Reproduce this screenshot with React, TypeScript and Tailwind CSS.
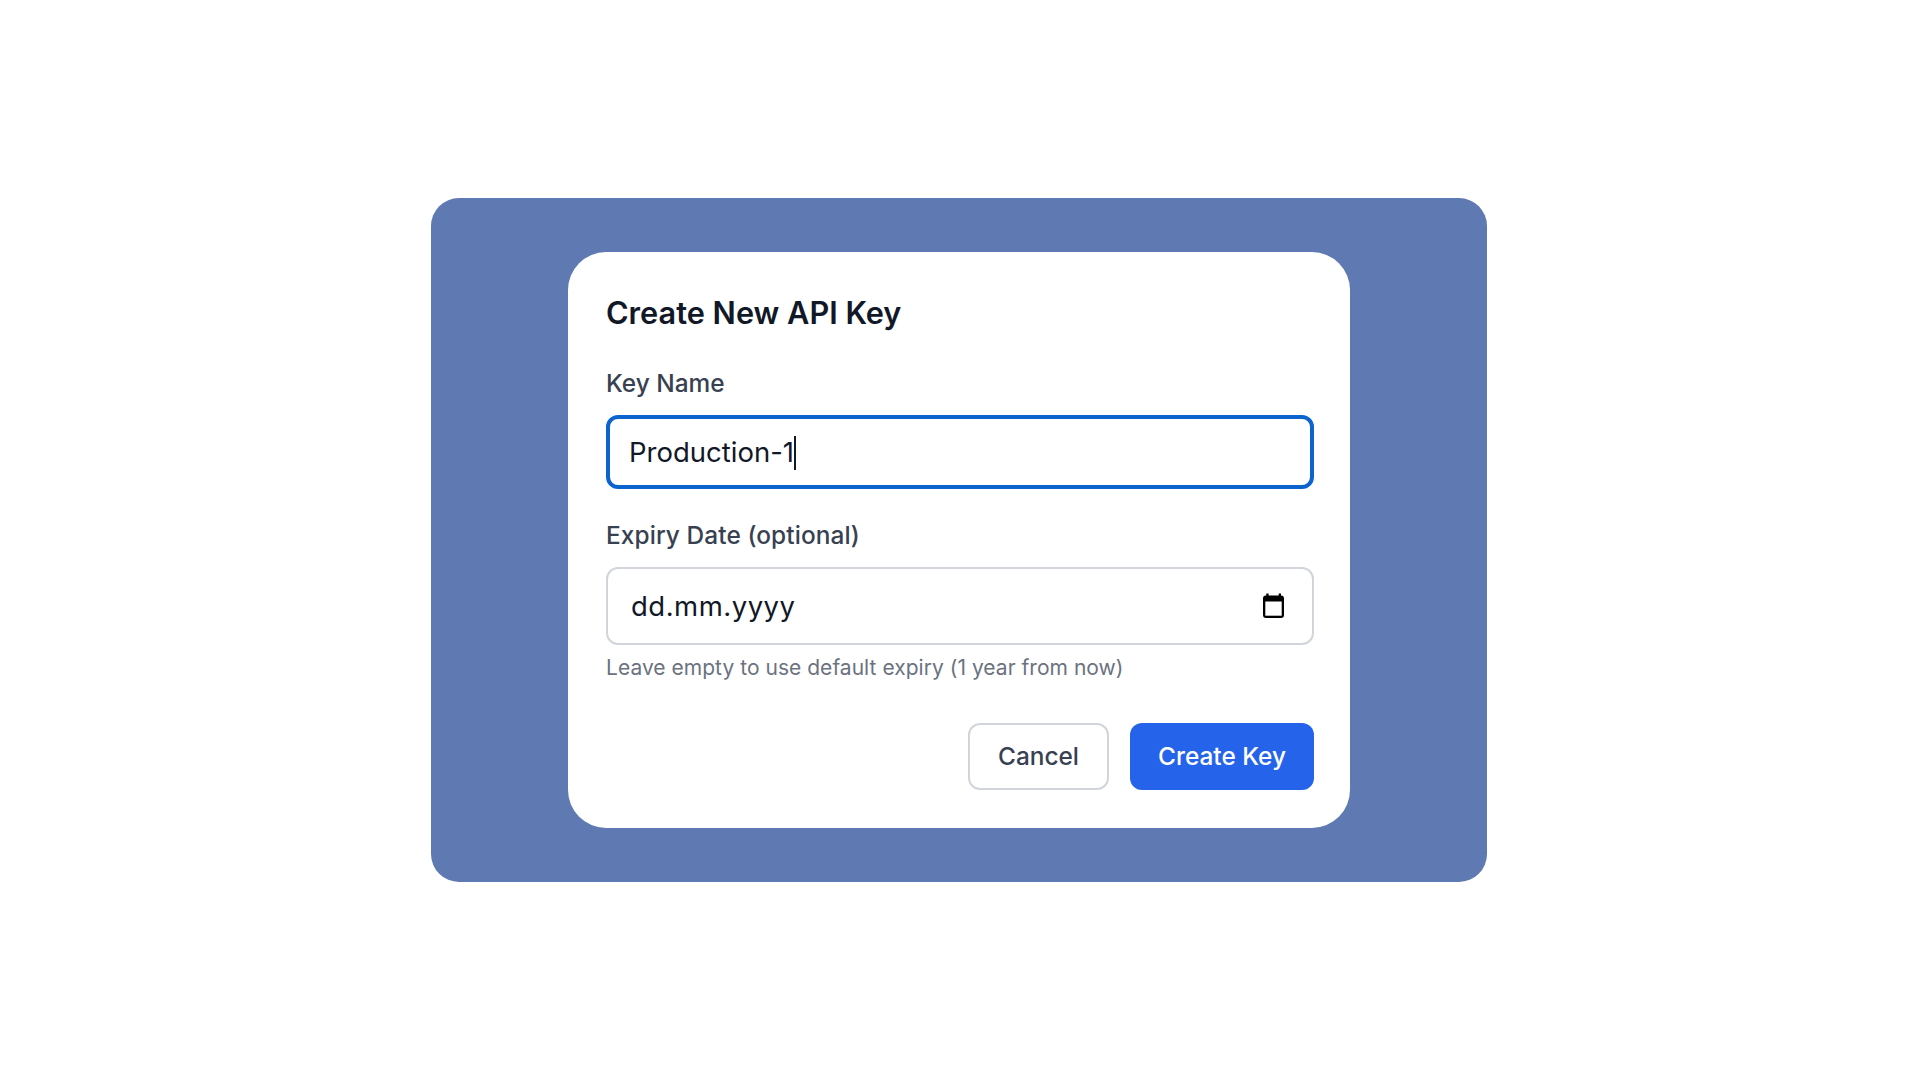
export default function App() {
  return (
    <div className="min-h-screen bg-white flex items-center justify-center font-['Inter',sans-serif] pr-[2px]">
      <div className="w-[1056px] h-[684px] rounded-[28px] bg-[#5f79b2] flex items-center justify-center">
        <div className="w-[782px] h-[576px] rounded-[38px] bg-white pl-[38px] pr-[36px] pt-[42px]">
          <h2 className="text-[30.7px] leading-[38px] font-semibold text-[#111827]">Create New API Key</h2>
          <label className="block mt-[34px] text-[24.4px] leading-[34px] font-medium text-[#374151]">Key Name</label>
          <div className="mt-[15px] h-[74px] rounded-[12px] border-[4px] border-[#0b63ce] pl-[19px] pt-[2px] flex items-center text-[27.5px] text-[#111827]">
            <span>Production-1</span>
            <span className="w-[2px] h-[34px] bg-[#111827]"></span>
          </div>
          <label className="block mt-[29px] text-[24.4px] leading-[34px] font-medium tracking-[0.1px] text-[#374151]">Expiry Date (optional)</label>
          <div className="mt-[15px] h-[78px] rounded-[12px] border-[2px] border-[#d1d5db] pl-[23px] pr-[28px] pt-[1px] flex items-center justify-between text-[27.5px] tracking-[0.5px] text-[#111827]">
            <span>dd.mm.yyyy</span>
            <svg className="mb-[2px]" width="21" height="25" viewBox="0 0 21 25" fill="none" aria-hidden="true">
              <path d="M3.3 2.5V0.5h2.3v2h10.1V0.5H18v2A3 3 0 0 1 21 5.500V22a3 3 0 0 1-3 3H3a3 3 0 0 1-3-3V5.500A3 3 0 0 1 3.300 2.500Z" fill="#000" />
              <rect x="2.300" y="8.500" width="16.400" height="14.200" fill="#fff" />
            </svg>
          </div>
          <p className="mt-[8px] text-[21px] leading-[30px] tracking-[0.03px] text-[#6b7280]">Leave empty to use default expiry (1 year from now)</p>
          <div className="mt-[40px] flex justify-end gap-[21px]">
            <button className="w-[141px] h-[67px] rounded-[12px] border-[2px] border-[#d1d5db] bg-white text-[24.4px] font-medium text-[#374151]">Cancel</button>
            <button className="w-[184px] h-[67px] rounded-[12px] bg-[#2563eb] text-[24.4px] font-medium text-white">Create Key</button>
          </div>
        </div>
      </div>
    </div>
  );
}
